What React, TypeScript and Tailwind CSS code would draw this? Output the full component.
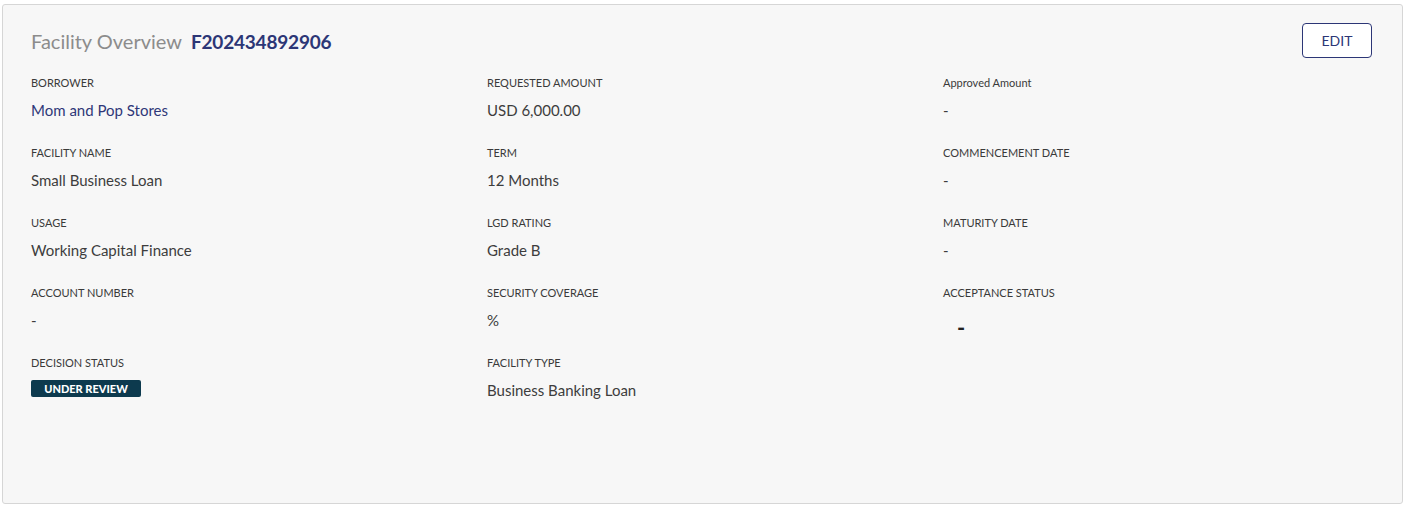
import React from 'react'

type Field = {
  label: string
  value?: string
  kind?: 'link' | 'badge' | 'dash'
}

const columns: Field[][] = [
  [
    { label: 'BORROWER', value: 'Mom and Pop Stores', kind: 'link' },
    { label: 'FACILITY NAME', value: 'Small Business Loan' },
    { label: 'USAGE', value: 'Working Capital Finance' },
    { label: 'ACCOUNT NUMBER', value: '-' },
    { label: 'DECISION STATUS', value: 'UNDER REVIEW', kind: 'badge' },
  ],
  [
    { label: 'REQUESTED AMOUNT', value: 'USD 6,000.00' },
    { label: 'TERM', value: '12 Months' },
    { label: 'LGD RATING', value: 'Grade B' },
    { label: 'SECURITY COVERAGE', value: '%' },
    { label: 'FACILITY TYPE', value: 'Business Banking Loan' },
  ],
  [
    { label: 'Approved Amount', value: '-' },
    { label: 'COMMENCEMENT DATE', value: '-' },
    { label: 'MATURITY DATE', value: '-' },
    { label: 'ACCEPTANCE STATUS', kind: 'dash' },
  ],
]

function FieldValue({ field }: { field: Field }) {
  if (field.kind === 'badge') {
    return (
      <div className="mt-[9px] flex">
        <span className="flex h-[17px] w-[110px] items-center justify-center rounded-[2px] bg-[#0d3a4e] text-[11px] font-black leading-none text-white">
          {field.value}
        </span>
      </div>
    )
  }
  if (field.kind === 'dash') {
    return (
      <div className="mt-[12px] h-[20px] pl-[14px] text-[22px] font-bold leading-[30px] text-[#222]">
        -
      </div>
    )
  }
  return (
    <div
      className={
        'mt-[9px] text-[15px] leading-[20px] ' +
        (field.kind === 'link' ? 'text-[#2f3779]' : 'text-[#3d3d3d]')
      }
    >
      {field.value}
    </div>
  )
}

export default function App() {
  return (
    <div className="min-h-[511px] bg-white pl-[2px] pr-[5px] pt-[4px] font-['Lato',sans-serif]">
      <div className="h-[500px] rounded-[3px] border border-[#d6d6d6] bg-[#f7f7f7] pl-[28px] pr-[30px] pt-[18px]">
        <div className="flex items-center justify-between">
          <h2 className="flex items-baseline gap-[9px] pt-[1px] text-[20px] leading-[24px]">
            <span className="text-[#8c8c8c]">Facility Overview</span>
            <span className="text-[19px] font-bold tracking-[-0.2px] text-[#2c3676]">F202434892906</span>
          </h2>
          <button
            type="button"
            className="h-[35px] w-[70px] rounded-[4px] border border-[#2c3676] bg-white text-[14px] text-[#2c3676]"
          >
            EDIT
          </button>
        </div>

        <div className="mt-[17px] grid grid-cols-[456px_456px_1fr]">
          {columns.map((col, i) => (
            <div key={i} className="flex flex-col gap-[25px]">
              {col.map((field) => (
                <div key={field.label}>
                  <div className="text-[11px] leading-[16px] text-[#3a3a3a]">{field.label}</div>
                  <FieldValue field={field} />
                </div>
              ))}
            </div>
          ))}
        </div>
      </div>
    </div>
  )
}
